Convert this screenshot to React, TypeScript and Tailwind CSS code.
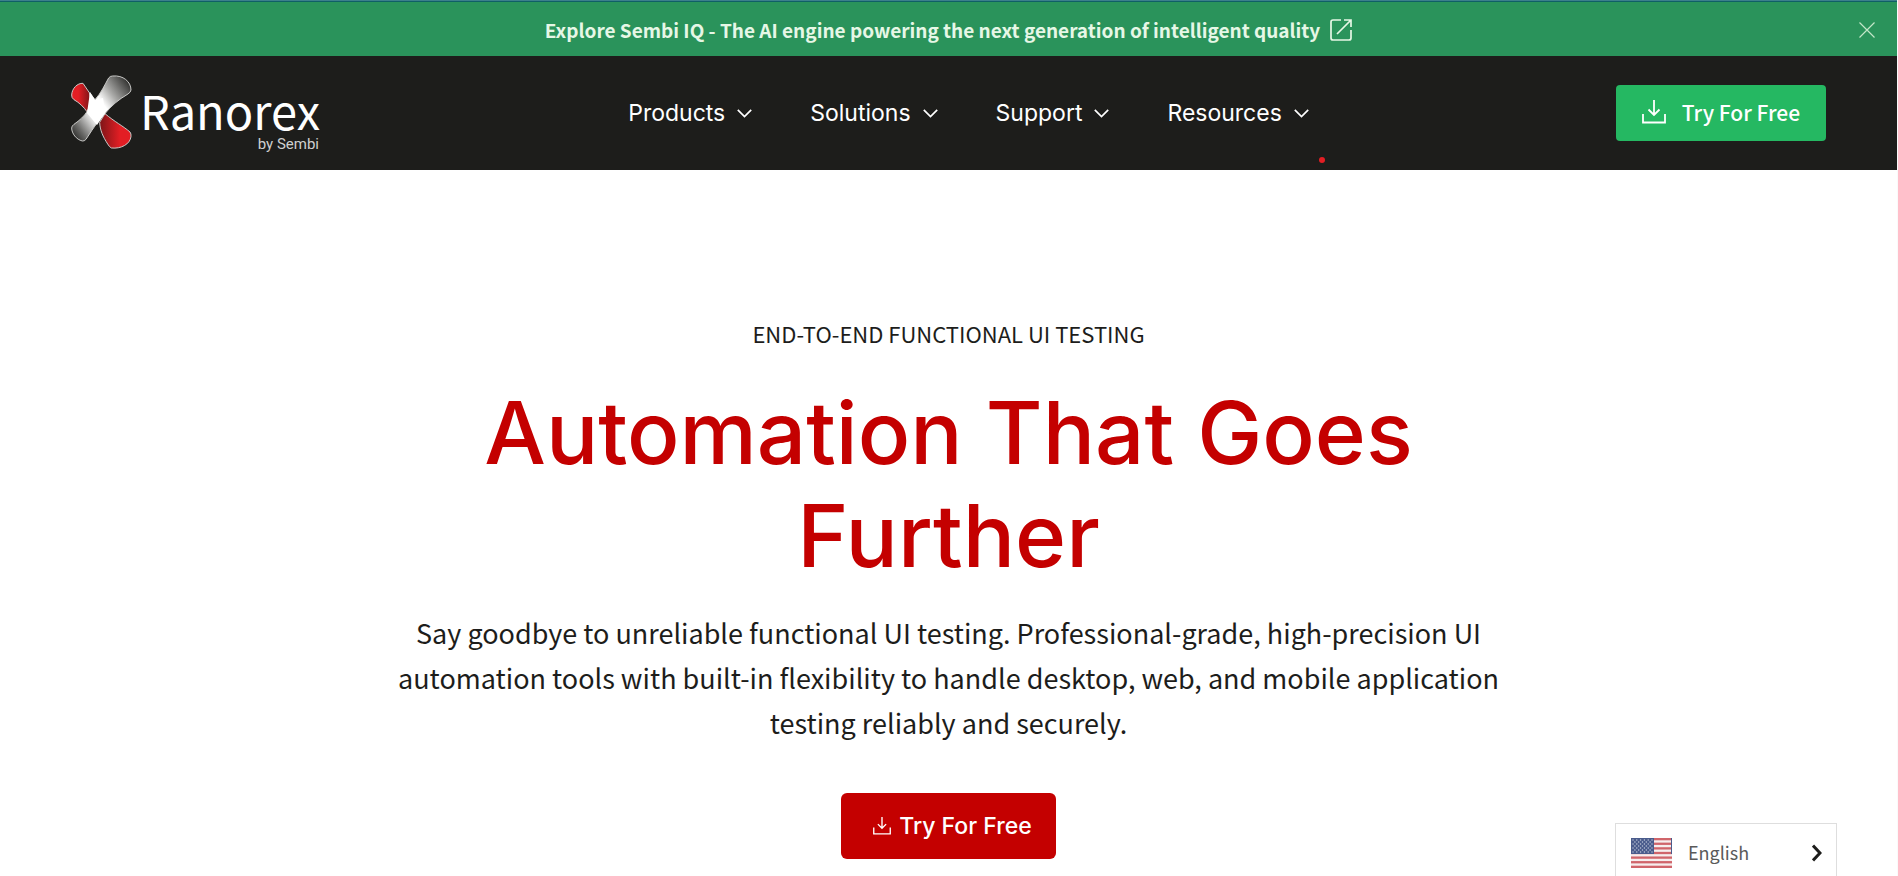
import React from 'react';

const NAV_ITEMS = ['Products', 'Solutions', 'Support', 'Resources'];

const STRIPES = [0, 2, 4, 6, 8, 10, 12];

const RanorexLogo = () => (
    <svg viewBox="0 0 250 86" className="w-[250px] h-[86px]" role="img" aria-label="Ranorex by Sembi">
        <defs>
            <linearGradient id="blade" gradientUnits="userSpaceOnUse" x1="65" y1="240" x2="243" y2="110">
                <stop offset="0" stopColor="#3a3a38" />
                <stop offset="0.1" stopColor="#6a6a68" />
                <stop offset="0.36" stopColor="#ffffff" />
                <stop offset="0.56" stopColor="#ffffff" />
                <stop offset="0.74" stopColor="#a8a8a6" />
                <stop offset="1" stopColor="#3a3a38" />
            </linearGradient>
            <linearGradient id="redTop" x1="0" x2="1">
                <stop offset="0.35" stopColor="#e31e24" />
                <stop offset="1" stopColor="#7d1518" />
            </linearGradient>
            <linearGradient id="redBottom" x1="0" x2="1">
                <stop offset="0" stopColor="#7d1518" />
                <stop offset="0.65" stopColor="#e31e24" />
            </linearGradient>
        </defs>
        <g transform="translate(0 5)">
            <g transform="scale(0.3333) translate(-63 -73)" stroke="#c9c9c7" strokeWidth="3" strokeLinejoin="round">
                <path d="M99 98C82 97 66 113 65 133Q64 141 72 147C88 156 102 170 111 183C121 166 124 146 118 126Z" fill="url(#redTop)" />
                <path d="M165 189C192 212 222 228 240 244Q244 249 243 258C240 281 213 295 184 292Q178 289 173 280C159 258 150 239 149 215Z" fill="url(#redBottom)" />
                <path d="M188 76C219 73 243 93 243 118Q242 125 234 130C205 147 183 166 165 189C148 207 139 220 125 240L108 266Q103 272 97 271C79 267 65 248 65 232Q65 226 72 221C89 209 103 196 111 183C122 166 124 145 119 126L135 147C153 128 165 101 176 82Q180 76 188 76Z" fill="url(#blade)" />
            </g>
            <path d="M19 17L24 25L32 23L34 38L26 50L16 38Z" fill="#ffffff" />
            <text x="69" y="55" fill="#ffffff" fontSize="47" fontFamily="'Noto Sans CJK JP', sans-serif">Ranorex</text>
            <text x="248" y="74" textAnchor="end" fill="#cfcfcf" fontSize="15" fontFamily="Roboto, sans-serif">by Sembi</text>
        </g>
    </svg>
);

const DownloadIcon = ({ className }: { className: string }) => (
    <svg viewBox="0 0 24 24" className={className} fill="none" stroke="currentColor" strokeWidth="1.8" aria-hidden="true">
        <path d="M12 0v15M6.500 9.500L12 15l5.500-5.500M1 14v8.500h22V14" />
    </svg>
);

const UsFlag = () => (
    <svg viewBox="0 0 41 30" className="w-[41px] h-[30px]" aria-hidden="true">
        <rect width="41" height="30" fill="#f6eeee" />
        {STRIPES.map(n => (
            <rect key={n} y={(n * 30) / 13} width="41" height="2.3" fill="#d0656b" />
        ))}
        <rect width="23" height="16" fill="#4a5c8c" />
        {[0, 1, 2, 3, 4, 5, 6].map(row => (
            Array.from({ length: row % 2 ? 5 : 6 }, (_, col) => (
                <circle key={`${row}-${col}`} cx={2 + col * 3.8 + (row % 2 ? 1.9 : 0)} cy={2 + row * 2} r="0.7" fill="#c3cadb" />
            ))
        ))}
        <rect x="40" width="1" height="16" fill="#4a5c8c" />
    </svg>
);

export default function App() {
    return (
        <div className="min-h-screen bg-white border-r border-[#fafafa] font-['Noto_Sans_CJK_JP','Noto_Sans',sans-serif] text-[#1d1d1b]">
            <div className="h-[2px] bg-[#3c7f8c] border-b border-[#0f5f66]" />

            {/* Announcement bar */}
            <div className="relative flex items-center justify-center h-[54px] pt-px bg-[#2a935b] text-[#e6f7e6]">
                <a href="#sembi-iq" className="flex items-center gap-2.5 text-[19px] leading-7 font-bold">
                    Explore Sembi IQ - The AI engine powering the next generation of intelligent quality
                    <svg viewBox="0 0 22 22" className="size-[22px]" fill="none" stroke="currentColor" strokeWidth="1.7" aria-hidden="true">
                        <path d="M11 1H3Q1 1 1 3v16Q1 21 3 21h16Q21 21 21 19v-8M14 1h7v7M21 1L7 15" />
                    </svg>
                </a>
                <button aria-label="Close" className="absolute right-[22px] text-[#c3e6c8]">
                    <svg viewBox="0 0 16 16" className="size-4" fill="none" stroke="currentColor" strokeWidth="1.2">
                        <path d="M0.500 0.500l15 15M15.500 0.500l-15 15" />
                    </svg>
                </button>
            </div>

            {/* Header */}
            <header className="relative flex items-center justify-between h-[114px] pl-[71px] pr-[71px] bg-[#1d1d1b] text-white">
                <a href="#home"><RanorexLogo /></a>
                <nav className="flex gap-[58px] font-['Inter',sans-serif] text-[23px] leading-8">
                    {NAV_ITEMS.map(item => (
                        <button key={item} className="flex items-center gap-3">
                            {item}
                            <svg viewBox="0 0 15 9" className="w-[15px] h-[9px]" fill="none" stroke="currentColor" strokeWidth="1.7" aria-hidden="true">
                                <path d="M0.800 0.800L7.500 7.500L14.200 0.800" />
                            </svg>
                        </button>
                    ))}
                </nav>
                <a href="#trial" className="flex items-center justify-center gap-4 h-14 w-[210px] pb-0.5 rounded bg-[#25b862] text-[21px] leading-8 font-medium">
                    <DownloadIcon className="size-6" />
                    Try For Free
                </a>
                <span className="absolute bottom-[7px] left-[1319px] size-1.5 rounded-full bg-[#e31e24]" />
            </header>

            {/* Hero */}
            <main className="flex flex-col items-center pt-[147px] text-center">
                <p className="text-[22px] leading-8 uppercase">End-to-End Functional UI Testing</p>
                <h1 className="mt-8 max-w-[1100px] font-['Inter',sans-serif] text-[87px] leading-[103px] font-medium text-[#c40000]">
                    Automation That Goes Further
                </h1>
                <p className="mt-[23px] max-w-[1120px] text-[27px] leading-[45px]">
                    Say goodbye to unreliable functional UI testing. Professional-grade, high-precision UI automation
                    tools with built-in flexibility to handle desktop, web, and mobile application testing reliably and securely.
                </p>
                <a href="#trial" className="mt-12 flex items-center gap-2 h-[66px] pl-8 pr-6 rounded-md bg-[#c40000] text-white font-['Inter',sans-serif] text-[23px] leading-8 font-medium">
                    <DownloadIcon className="size-[18px]" />
                    Try For Free
                </a>
            </main>

            {/* Language picker */}
            <button className="fixed bottom-0 right-[61px] flex items-center w-[222px] h-[53px] pt-1.5 pl-[15px] pr-[14px] bg-white border border-b-0 border-[#dedede] text-[18px] leading-7 text-[#5a5a5a]">
                <UsFlag />
                <span className="ml-4 pb-0.5">English</span>
                <svg viewBox="0 0 10 18" className="ml-auto w-[10px] h-[18px]" fill="none" stroke="#1d1d1b" strokeWidth="3" aria-hidden="true">
                    <path d="M1 1.500L8 9L1 16.500" />
                </svg>
            </button>
        </div>
    );
}
